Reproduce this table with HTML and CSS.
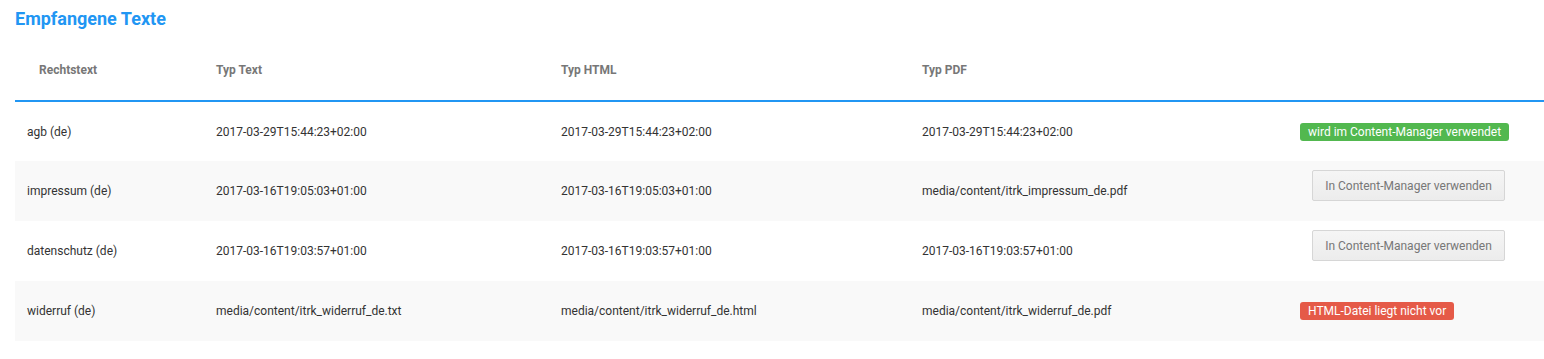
FILE: index.html
```html
<!DOCTYPE html>
<html lang="de">
<head>
    <meta charset="UTF-8">
    <meta name="viewport" content="width=device-width, initial-scale=1.0">
    <title>Empfangene Texte</title>
    <link rel="stylesheet" href="styles.css">
</head>
<body>
    <div class="panel">
        <h2 class="panel-title">Empfangene Texte</h2>

        <table class="texts">
            <thead>
                <tr>
                    <th class="col-name">Rechtstext</th>
                    <th class="col-text">Typ Text</th>
                    <th class="col-html">Typ HTML</th>
                    <th class="col-pdf">Typ PDF</th>
                    <th class="col-status"></th>
                </tr>
            </thead>
            <tbody>
                <tr>
                    <td>agb (de)</td>
                    <td>2017-03-29T15:44:23+02:00</td>
                    <td>2017-03-29T15:44:23+02:00</td>
                    <td>2017-03-29T15:44:23+02:00</td>
                    <td><span class="label label-success">wird im Content-Manager verwendet</span></td>
                </tr>
                <tr>
                    <td>impressum (de)</td>
                    <td>2017-03-16T19:05:03+01:00</td>
                    <td>2017-03-16T19:05:03+01:00</td>
                    <td>media/content/itrk_impressum_de.pdf</td>
                    <td><button class="btn">In Content-Manager verwenden</button></td>
                </tr>
                <tr>
                    <td>datenschutz (de)</td>
                    <td>2017-03-16T19:03:57+01:00</td>
                    <td>2017-03-16T19:03:57+01:00</td>
                    <td>2017-03-16T19:03:57+01:00</td>
                    <td><button class="btn">In Content-Manager verwenden</button></td>
                </tr>
                <tr>
                    <td>widerruf (de)</td>
                    <td>media/content/itrk_widerruf_de.txt</td>
                    <td>media/content/itrk_widerruf_de.html</td>
                    <td>media/content/itrk_widerruf_de.pdf</td>
                    <td><span class="label label-danger">HTML-Datei liegt nicht vor</span></td>
                </tr>
            </tbody>
        </table>
    </div>
</body>
</html>
```

FILE: styles.css
```css
body {
    margin: 0;
    font-family: Roboto, "Liberation Sans", Arial, sans-serif;
    background: #fff;
    color: #333;
}

.panel {
    padding: 8px 0 0 15px;
}

.panel-title {
    margin: 0;
    font-size: 18px;
    font-weight: 700;
    line-height: 21px;
    color: #2196f3;
}

.texts {
    width: 100%;
    margin-top: 10px;
    border-collapse: collapse;
    table-layout: fixed;
    font-size: 12px;
}

.texts th,
.texts td {
    box-sizing: border-box;
    padding: 0 12px;
    text-align: left;
    vertical-align: middle;
    white-space: nowrap;
}

.texts th {
    height: 62px;
    font-weight: 700;
    color: #777;
    border-bottom: 2px solid #2196f3;
}

.texts th.col-name {
    padding-left: 24px;
}

.col-name { width: 189px; }
.col-text { width: 345px; }
.col-html { width: 361px; }
.col-pdf { width: 378px; }
.col-status { width: 256px; }

.texts td {
    height: 60px;
    color: #333;
}

.texts tbody tr:nth-child(even) {
    background-color: #f9f9f9;
}

.label {
    display: inline-block;
    padding: 2px 8px;
    line-height: 14px;
    font-size: 12px;
    color: #fff;
    border-radius: 3px;
}

.label-success {
    background-color: #52b84f;
}

.label-danger {
    background-color: #e55a48;
}

.btn {
    margin: 0 0 11px 12px;
    width: 193px;
    height: 31px;
    padding: 0;
    font-family: inherit;
    font-size: 12px;
    color: #777;
    background: linear-gradient(#f5f5f5, #ececec);
    border: 1px solid #d6d6d6;
    border-radius: 2px;
    vertical-align: middle;
    cursor: pointer;
}

.btn:hover {
    background: #e6e6e6;
}
```
